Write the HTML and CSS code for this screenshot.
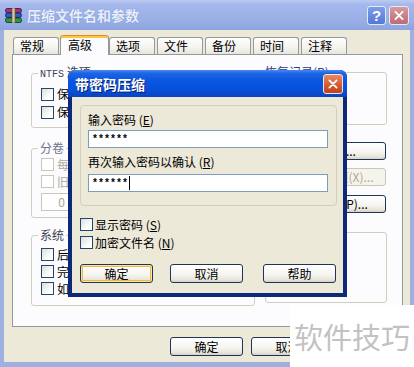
FILE: index.html
```html
<!DOCTYPE html>
<html lang="zh-CN">
<head>
<meta charset="utf-8">
<title>压缩文件名和参数</title>
<link rel="stylesheet" href="styles.css">
</head>
<body>
<div class="win">
  <div class="titlebar">
    <svg class="appicon" viewBox="0 0 17 15" width="17" height="15">
      <rect x="0.5" y="0.5" width="16" height="4.2" rx="1.8" fill="#A0337F" stroke="#3A1030" stroke-width="0.8"/>
      <rect x="0.5" y="5.2" width="16" height="4.2" rx="1.8" fill="#2F5BC4" stroke="#10204A" stroke-width="0.8"/>
      <rect x="0.5" y="9.9" width="16" height="4.6" rx="1.8" fill="#33913F" stroke="#0E3414" stroke-width="0.8"/>
      <rect x="7" y="0" width="3" height="15" fill="#D9C79A" stroke="#6B5A35" stroke-width="0.6"/>
    </svg>
    <span class="title">压缩文件名和参数</span>
    <span class="tbtn help">?</span>
    <span class="tbtn close">
      <svg viewBox="0 0 20 19" width="20" height="19"><path d="M6 5.5 L14 13.5 M14 5.5 L6 13.5" stroke="#fff" stroke-width="2" stroke-linecap="round"/></svg>
    </span>
  </div>

  <div class="client">
    <div class="tabs">
      <div class="tab">常规</div>
      <div class="tab sel">高级</div>
      <div class="tab">选项</div>
      <div class="tab">文件</div>
      <div class="tab">备份</div>
      <div class="tab">时间</div>
      <div class="tab">注释</div>
    </div>

    <div class="panel">
      <div class="col col-left">
        <fieldset class="grp g-ntfs">
          <legend class="lg-dark"><span class="mono">NTFS</span> 选项</legend>
          <div class="cbrow tall"><span class="cb"></span><span class="lbl">保存文件安全数据(S)</span></div>
          <div class="cbrow tall"><span class="cb"></span><span class="lbl">保存文件流数据(T)</span></div>
        </fieldset>
        <fieldset class="grp g-vol">
          <legend class="lg-gray">分卷</legend>
          <div class="cbrow"><span class="cb dis"></span><span class="lbl dis">每个分卷之后暂停(V)</span></div>
          <div class="cbrow"><span class="cb dis"></span><span class="lbl dis">旧风格分卷名(O)</span></div>
          <div class="numbox">0</div>
        </fieldset>
        <fieldset class="grp g-sys">
          <legend class="lg-dark">系统</legend>
          <div class="cbrow"><span class="cb"></span><span class="lbl">后台压缩(B)</span></div>
          <div class="cbrow"><span class="cb"></span><span class="lbl">完成操作后关闭计算机电源(F)</span></div>
          <div class="cbrow"><span class="cb"></span><span class="lbl">如果其他 WinRAR 副本被激活则等待(W)</span></div>
        </fieldset>
      </div>
      <div class="col col-right">
        <fieldset class="grp g-rec">
          <legend class="lg-blue">恢复记录(R)</legend>
          <div class="sp46"></div>
        </fieldset>
        <div class="btn rb b1">压缩(C)...</div>
        <div class="btn rb b2 disabled">自解压选项(X)...</div>
        <div class="btn rb b3">设置密码(P)...</div>
        <fieldset class="grp g-empty">
          <legend class="lg-blue">其他</legend>
          <div class="sp64"></div>
        </fieldset>
      </div>
    </div>

    <div class="actions">
      <div class="btn">确定</div>
      <div class="btn">取消</div>
      <div class="btn">帮助</div>
    </div>
  </div>

  <div class="dlg">
    <div class="dlg-title">
      <span class="dlg-caption">带密码压缩</span>
      <span class="dlg-close">
        <svg viewBox="0 0 20 20" width="20" height="20"><path d="M6 6 L14 14 M14 6 L6 14" stroke="#fff" stroke-width="2" stroke-linecap="round"/></svg>
      </span>
    </div>
    <div class="dlg-body">
      <div class="pw-grp">
        <div class="pw-lbl">输入密码 (<u>E</u>)</div>
        <div class="pw-input">******</div>
        <div class="pw-lbl l2">再次输入密码以确认 (<u>R</u>)</div>
        <div class="pw-input i2">******<span class="caret"></span></div>
      </div>
      <div class="dlg-checks">
        <div class="dcrow"><span class="cb"></span><span>显示密码 (<u>S</u>)</span></div>
        <div class="dcrow"><span class="cb"></span><span>加密文件名 (<u>N</u>)</span></div>
      </div>
      <div class="dlg-btns">
        <div class="btn default">确定</div>
        <div class="btn mid">取消</div>
        <div class="btn last">帮助</div>
      </div>
    </div>
  </div>

  <div class="watermark">软件技巧</div>
</div>
</body>
</html>
```

FILE: styles.css
```css
* { box-sizing: border-box; }
html, body { margin: 0; padding: 0; }
body {
  width: 414px;
  height: 367px;
  overflow: hidden;
  background: #fff;
  font-family: "Noto Sans CJK SC", "Noto Sans", sans-serif;
  font-size: 12px;
  color: #000;
}

.win {
  position: relative;
  width: 414px;
  height: 367px;
  display: flex;
  flex-direction: column;
  background: #9DB0E0;
}

/* outer title bar (inactive) */
.titlebar {
  height: 30px;
  flex: none;
  display: flex;
  align-items: center;
  padding: 0 5px;
  background: linear-gradient(#BACAF2 0, #A4B8EC 15%, #98AEE6 70%, #8EA4DE 100%);
}
.appicon { width: 17px; height: 15px; margin-right: 5px; flex: none; }
.title {
  flex: 1;
  font-size: 14px;
  line-height: 16px;
  font-weight: bold;
  color: #E8EEFB;
  text-shadow: 0 0 1px #6C82C0;
}
.tbtn {
  height: 19px;
  border: 1px solid #E4EAF8;
  border-radius: 3px;
  display: flex;
  align-items: center;
  justify-content: center;
  flex: none;
}
.help {
  width: 19px;
  margin-right: 3px;
  background: linear-gradient(#7C9DE6, #5479D6);
  color: #fff;
  font-family: "Liberation Sans", sans-serif;
  font-weight: bold;
  font-size: 15px;
  line-height: 17px;
}
.close {
  width: 20px;
  background: linear-gradient(#D79A9E, #BE6B75);
}
.close svg { display: block; }

/* client area */
.client {
  flex: 1;
  margin: 0 4px 5px 4px;
  background: #ECE9D8;
  display: flex;
  flex-direction: column;
}
.tabs {
  display: flex;
  align-items: flex-end;
  height: 24px;
  padding-left: 9px;
  padding-top: 5px;
}
.tab {
  width: 46px;
  height: 17px;
  margin-right: 2px;
  padding-left: 6px;
  border: 1px solid #919B9C;
  border-bottom: none;
  border-radius: 3px 3px 0 0;
  background: linear-gradient(#FFFFFF, #F4F3EE 60%, #E6E5DC);
  font-size: 12px;
  line-height: 15px;
  white-space: nowrap;
}
.tab.sel {
  position: relative;
  z-index: 2;
  width: 49px;
  height: 20px;
  margin-left: -1px;
  margin-right: 0;
  margin-bottom: -1px;
  padding-left: 7px;
  border-top: 1px solid #E68B2C;
  box-shadow: inset 0 2px 0 #FFC73C;
  background: #FCFCFE;
  line-height: 18px;
}

.panel {
  height: 273px;
  margin: 0 7px 0 8px;
  background: #FCFCFE;
  border: 1px solid #919B9C;
  display: grid;
  grid-template-columns: 1fr 122px;
  column-gap: 10px;
  padding: 11px 15px 0 18px;
}
.col { display: flex; flex-direction: column; min-width: 0; }
.col-left { overflow: hidden; }

.grp {
  margin: 0;
  padding: 0 0 0 9px;
  min-width: 0;
  border: 1px solid #D0D0BF;
  border-radius: 3px;
}
.grp legend {
  padding: 0 2px;
  margin-left: -3px;
  font-size: 12px;
  line-height: 12px;
  white-space: nowrap;
}
.lg-dark { color: #3A3F4E; }
.lg-gray { color: #6E7488; }
.lg-blue { color: #233A86; }
.mono { font-family: "Liberation Mono", monospace; font-size: 10px; }

.g-ntfs { padding-top: 4px; padding-bottom: 6px; }
.g-vol { margin-top: 14px; padding-top: 2px; padding-bottom: 6px; }
.g-sys { margin-top: 11px; padding-top: 5px; padding-bottom: 8px; }

.cbrow {
  height: 17px;
  display: flex;
  align-items: center;
  white-space: nowrap;
}
.cbrow.tall { height: 18px; }
.cb {
  width: 13px;
  height: 13px;
  flex: none;
  border: 1px solid #24466E;
  background: linear-gradient(135deg, #DCDCD7, #FFFFFF 70%);
}
.cb.dis { border-color: #C9C7BA; background: #FFFFFF; }
.lbl { margin-left: 3px; line-height: 14px; }
.lbl.dis { color: #ACA899; }

.numbox {
  width: 29px;
  height: 18px;
  margin-top: 3px;
  border: 1px solid #C9C7BA;
  background: #fff;
  color: #ACA899;
  text-align: right;
  padding-right: 4px;
  line-height: 16px;
}

.g-rec { padding: 0; }
.g-empty { padding: 0; margin-top: 13px; }
.sp46 { height: 46px; }
.sp64 { height: 64px; }

/* buttons */
.btn {
  width: 73px;
  height: 19px;
  border: 1px solid #1F3556;
  border-radius: 3px;
  background: linear-gradient(#FFFFFF 0, #F6F5F0 55%, #E8E6DC 85%, #D6D0C5 100%);
  text-align: center;
  font-size: 12px;
  line-height: 17px;
  white-space: nowrap;
  flex: none;
}
.rb { width: 110px; height: 18px; line-height: 16px; align-self: flex-end; margin-right: 1px; }
.b1 { margin-top: 17px; }
.b2 { margin-top: 8px; }
.b3 { margin-top: 9px; }
.btn.disabled { border-color: #C9C7BA; color: #ACA899; background: #F5F4EA; }

.actions {
  display: flex;
  justify-content: flex-end;
  gap: 8px;
  margin-top: 10px;
  padding-right: 5px;
}

/* modal password dialog */
.dlg {
  position: absolute;
  left: 68px;
  top: 70px;
  width: 279px;
  height: 227px;
  display: flex;
  flex-direction: column;
  border-radius: 7px 7px 0 0;
  background: #0D2A78;
  overflow: hidden;
  z-index: 5;
}
.dlg-title {
  height: 27px;
  flex: none;
  display: flex;
  align-items: center;
  padding: 0 4px 0 7px;
  background: linear-gradient(#4C8AF0 0, #1E64E4 12%, #0A56E0 40%, #0650DB 75%, #0843BE 100%);
}
.dlg-caption {
  flex: 1;
  color: #fff;
  font-weight: bold;
  font-size: 14px;
  line-height: 16px;
  text-shadow: 1px 1px 0 #0A1C6E;
}
.dlg-close {
  width: 20px;
  height: 20px;
  border: 1px solid #F3E6E0;
  border-radius: 3px;
  background: linear-gradient(#E88A62, #D2592F 60%, #B8431F);
  display: flex;
  align-items: center;
  justify-content: center;
}
.dlg-close svg { display: block; }

.dlg-body {
  flex: 1;
  margin: 0 4px 4px 4px;
  background: #ECE9D8;
  padding: 8px 6px 0 8px;
  display: flex;
  flex-direction: column;
}
.pw-grp {
  border: 1px solid #D0D0BF;
  border-radius: 4px;
  padding: 7px 8px 13px 7px;
}
.pw-lbl { line-height: 14px; white-space: nowrap; }
.pw-lbl.l2 { margin-top: 7px; }
.pw-input {
  height: 18px;
  margin-top: 3px;
  border: 1px solid #7F9DB9;
  background: #fff;
  font-family: "Liberation Mono", monospace;
  font-weight: bold;
  font-size: 10px;
  line-height: 19px;
  padding-left: 3px;
  display: flex;
  align-items: center;
}
.pw-input.i2 { margin-top: 5px; }
.caret {
  width: 1px;
  height: 14px;
  background: #000;
  margin-left: 1px;
}

.dlg-checks { margin-top: 9px; }
.dcrow {
  height: 18px;
  display: flex;
  align-items: center;
  gap: 2px;
  white-space: nowrap;
}
.dlg-btns {
  display: flex;
  margin-top: 13px;
}
.dlg-btns .btn.default {
  box-shadow: inset 0 0 0 1px #FBE3A0, inset 0 0 0 2px #F0B845;
  margin-right: 17px;
}
.dlg-btns .btn.mid { margin-right: 20px; }
.dlg-btns .btn.last { width: 73px; }

/* watermark overlay */
.watermark {
  position: absolute;
  left: 290px;
  top: 305px;
  width: 124px;
  height: 62px;
  background: #FFFFFF;
  color: #C2C2C2;
  font-size: 29px;
  line-height: 62px;
  text-align: center;
  z-index: 10;
  white-space: nowrap;
}
```
